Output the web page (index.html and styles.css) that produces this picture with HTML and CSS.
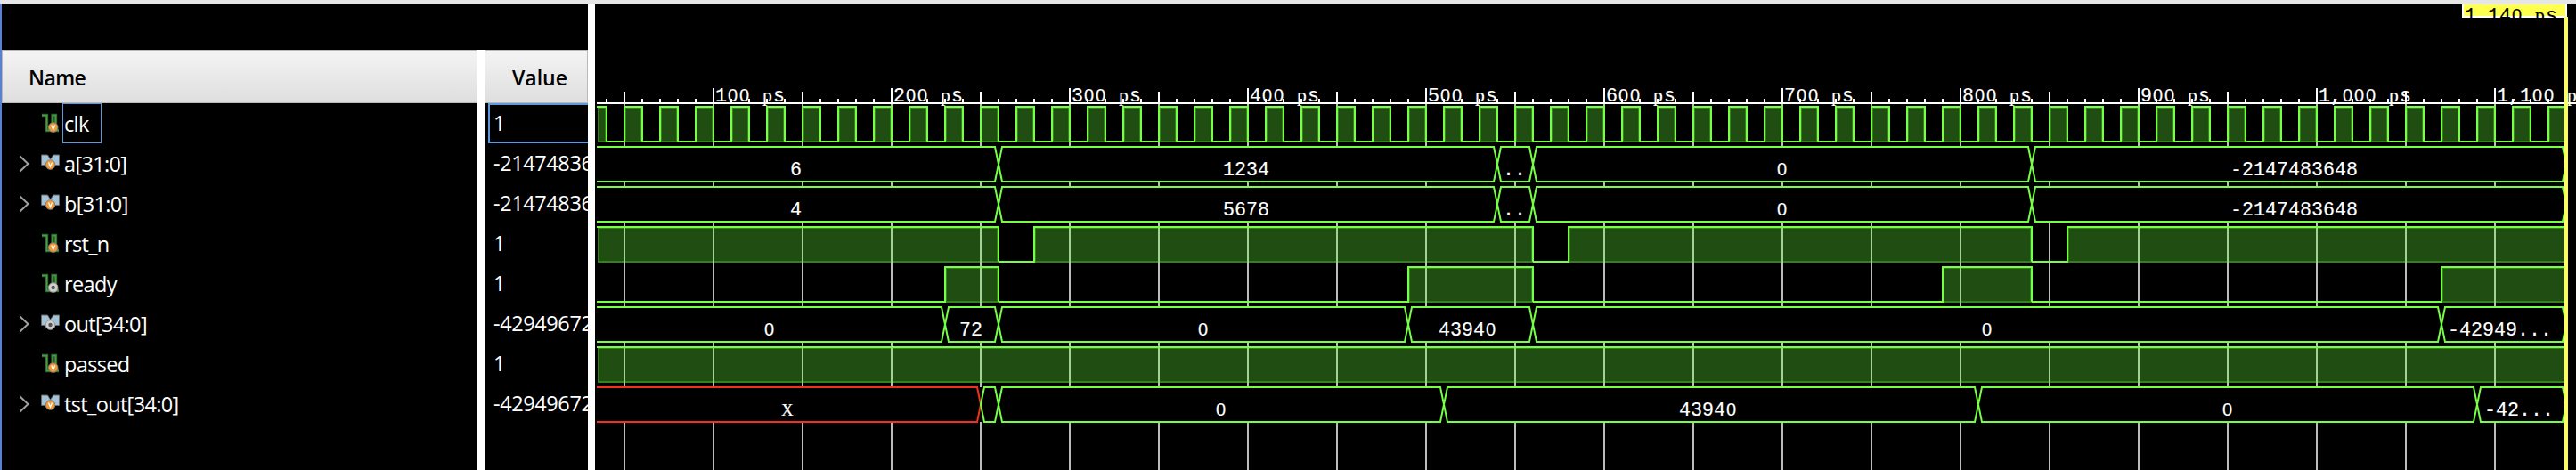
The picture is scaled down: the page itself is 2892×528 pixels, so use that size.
FILE: index.html
```html
<!DOCTYPE html>
<html lang="en">
<head>
<meta charset="utf-8">
<title>Waveform viewer</title>
<link rel="stylesheet" href="styles.css">
</head>
<body>
<svg class="defs" width="0" height="0">
  <defs>
    <g id="scalar">
      <path d="M1 1.5H6.5V18.5H13V1.5H16.5V18.5H20" fill="none" stroke="#2c632b" stroke-width="3.4"/>
      <path d="M1 1.5H6.5V18.5H13V1.5H16.5V18.5H20" fill="none" stroke="#4a9a48" stroke-width="1.5"/>
    </g>
    <g id="bus"><path d="M.5 1H7.5L10.5 6L14 1H20.5V12.5H.5Z" fill="#a3c3d8" stroke="#666" stroke-width="1"/></g>
    <g id="v"><circle r="5.3" fill="#f09a36" stroke="#8a7c70" stroke-width="1"/><path d="M-2-2.4L0 2.3L2-2.4" fill="none" stroke="#fff" stroke-width="1.3"/></g>
    <g id="o"><circle r="5.3" fill="#d0d0d0" stroke="#999" stroke-width="1"/><circle r="2.2" fill="#555"/></g>
  </defs>
</svg>
<main class="viewer">
  <section class="names">
    <header class="head name-head">Name</header>
    <div id="names"></div>
  </section>
  <section class="values">
    <header class="head value-head">Value</header>
    <div id="values"></div>
  </section>
  <section class="waves"><svg id="wave" width="2224" height="524" viewBox="668 4 2224 524"></svg></section>
</main>
<script src="wave.js"></script>
</body>
</html>
```
FILE: styles.css
```css
* { box-sizing: border-box; }
body { margin: 0; background: #000; overflow: hidden; }
.defs { display: block; height: 0; }
.viewer { display: flex; width: 2892px; height: 528px; border-top: 4px solid #e6e6e6; background: #000; color: #fff; font-family: "Open Sans", "Noto Sans", sans-serif; }
.names { width: 544px; padding-top: 52px; border-left: 2px solid #5b80d0; background: linear-gradient(#fff, #fff) 534px 52px / 8px 480px no-repeat; }
.values { width: 124px; padding-top: 52px; border-right: 8px solid #fff; overflow: hidden; }
.waves { flex: 1; overflow: hidden; }
.waves svg { display: block; }
.head { height: 60px; border: 1px solid #b9b9b9; background: linear-gradient(#f4f4f4, #dededf); color: #000; font-weight: 600; font-size: 23px; line-height: 60px; }
.name-head { width: 534px; padding-left: 29px; letter-spacing: -.6px; }
.value-head { padding-left: 30px; }
.row { display: flex; align-items: center; height: 45px; font-size: 23.5px; letter-spacing: -.65px; white-space: pre; }
.arrow { width: 12px; height: 20px; margin-left: 19px; flex: none; }
.icon { width: 22px; height: 22px; margin-left: 13px; overflow: visible; flex: none; }
.label { height: 45px; line-height: 45px; margin-left: 2px; padding-left: 1px; border: 1px solid transparent; }
.label.focus { width: 44px; border-color: #5a9bdc; }
.value { padding-left: 10px; letter-spacing: -.4px; line-height: 45px; }
.value.focus { margin-left: 4px; padding-left: 4px; border: 2px solid #5a9bdc; border-right: 0; }
.mono { font: 21.67px "Liberation Mono", monospace; fill: #fff; stroke: #fff; stroke-width: .15px; }
.zero { font-family: "Liberation Sans", sans-serif; font-size: 20px; }
.serif { font-family: "Liberation Serif", serif; }
.flag { fill: #000; stroke: #000; }
```
FILE: wave.js
```js
const GREEN = '#76ff46', RED = '#f03020';
const signals = [
  ['clk', 'scalar', 'v', '1'],
  ['a[31:0]', 'bus', 'v', '-2147483648'],
  ['b[31:0]', 'bus', 'v', '-2147483648'],
  ['rst_n', 'scalar', 'v', '1'],
  ['ready', 'scalar', 'o', '1'],
  ['out[34:0]', 'bus', 'o', '-4294967296'],
  ['passed', 'scalar', 'v', '1'],
  ['tst_out[34:0]', 'bus', 'v', '-4294967296']
];
document.getElementById('names').innerHTML = signals.map(([n, kind, badge], i) => {
  const arrow = kind === 'bus' ? '<path d="M1.5 1.5L10.5 10L1.5 18.5" fill="none" stroke="#a0a0a0" stroke-width="2"/>' : '';
  const at = kind === 'bus' ? '10.5 12' : '13.7 15';
  return `<div class="row"><svg class="arrow">${arrow}</svg><svg class="icon"><use href="#${kind}"/><use href="#${badge}" transform="translate(${at})"/></svg><span class="label${i ? '' : ' focus'}">${n}</span></div>`;
}).join('');
document.getElementById('values').innerHTML = signals.map((s, i) => `<div class="row value${i ? '' : ' focus'}">${s[3]}</div>`).join('');

const X = t => 601 + 2 * t;
const LEFT = 670, END = 2881;
let out = '';
const rect = (x, y, w, h, f) => { out += `<rect x="${x}" y="${y}" width="${w}" height="${h}" fill="${f}"/>`; };
const line = (d, c) => { out += `<path d="${d}" fill="none" stroke="${c}" stroke-width="2"/>`; };
// Monospaced label: one position for each character, 13px apart
const glyph = (c, x) => {
  if (c === '0') return `<tspan class="zero" x="${x + 1}">0</tspan>`;
  if (c === 'p') return `<tspan class="serif" x="${x + 1}">p</tspan>`;
  if (c === 'X') return `<tspan class="serif" font-size="19" x="${x}">X</tspan>`;
  return `<tspan x="${x}">${c}</tspan>`;
};
const mono = (s, x, y, cls = '') => {
  out += `<text class="mono ${cls}" y="${y}">` + [...s].map((c, i) => glyph(c, x + i * 13)).join('') + '</text>';
};

for (let t = 50; t <= 1100; t += 50) rect(X(t) - 1, 117, 2, 411, '#bcbcbc');

// Two-state signals: list of [start, end] high intervals
function digital(row, highs) {
  const top = 120 + row * 45, bot = top + 39;
  let d = '', low = LEFT;
  for (const [a, b] of highs) {
    const x0 = a === null ? LEFT : X(a), x1 = X(b);
    const fx = a === null ? 671 : x0;
    out += `<rect x="${fx}" y="${top}" width="${x1 - fx}" height="40" fill="#68ff3c" fill-opacity=".3"/>`;
    out += `<rect x="${fx + 1}" y="${top + 1}" width="${x1 - fx - 2}" height="38" fill="none" stroke="#68ff3c" stroke-opacity=".3" stroke-width="2"/>`;
    if (a !== null) d += `M${low} ${bot}H${x0}V${top}H${x1}`;
    else d += `M${LEFT} ${top}H${x1}`;
    if (x1 < END) d += `V${bot}`;
    low = x1;
  }
  if (low < END) d += `M${low} ${bot}H${END}`;
  line(d, GREEN);
}
// Vector signals: list of [end time, text, text x, colour]
function bus(row, parts) {
  const top = 120 + row * 45, bot = top + 39, mid = top + 19.5;
  rect(LEFT, top, END - LEFT, 39, '#000');
  let start = null;
  for (const [end, text, tx, color = GREEN] of parts) {
    const x1 = X(end);
    let d;
    if (start === null) d = `M${LEFT} ${top}H${x1 - 4}L${x1} ${mid}L${x1 - 4} ${bot}H${LEFT}`;
    else { const x0 = X(start); d = `M${x0} ${mid}L${x0 + 4} ${top}H${x1 - 4}L${x1} ${mid}L${x1 - 4} ${bot}H${x0 + 4}Z`; }
    line(d, color);
    if (text) mono(text, tx, top + 32);
    start = end;
  }
}
const clk = [[null, 40]];
for (let t = 50; t < 1140; t += 20) clk.push([t, Math.min(t + 10, 1140)]);
digital(0, clk);
bus(1, [[260, '6', 887], [540, '1234', 1373], [560, '..', 1687], [840, '0', 1994], [1140, '-2147483648', 2504]]);
bus(2, [[260, '4', 887], [540, '5678', 1373], [560, '..', 1687], [840, '0', 1994], [1140, '-2147483648', 2504]]);
digital(3, [[null, 260], [280, 560], [580, 840], [860, 1140]]);
digital(4, [[230, 260], [490, 560], [790, 840], [1070, 1140]]);
bus(5, [[230, '0', 857], [260, '72', 1077], [490, '0', 1344], [560, '43940', 1615], [1070, '0', 2224], [1140, '-42949...', 2748]]);
digital(6, [[null, 1140]]);
bus(7, [[250, 'X', 877, RED], [260, ''], [510, '0', 1364], [810, '43940', 1885], [1090, '0', 2494], [1140, '-42...', 2789]]);

// Time ruler
rect(LEFT, 115, 2222, 2, '#fff');
for (let t = 40; t < 1140; t += 10) {
  const h = t % 100 === 0 ? 17 : t % 50 === 0 ? 13 : 5;
  rect(X(t) - 1, 116 - h, 2, h, '#fff');
}
for (let t = 100; t <= 1100; t += 100) mono(`${t.toLocaleString('en-US')} ps`, X(t) + 2, 114);

// Cursor with its time flag
rect(2764, 4, 118, 16, '#fff');
rect(2766, 5, 114, 13, '#ffff50');
out += '<clipPath id="flagclip"><rect x="2764" y="4" width="118" height="16"/></clipPath><g clip-path="url(#flagclip)">';
mono('1,140 ps', 2767, 24, 'flag');
out += '</g>';
rect(2879, 19, 4, 509, '#ffff50');
document.getElementById('wave').innerHTML = out;
```
